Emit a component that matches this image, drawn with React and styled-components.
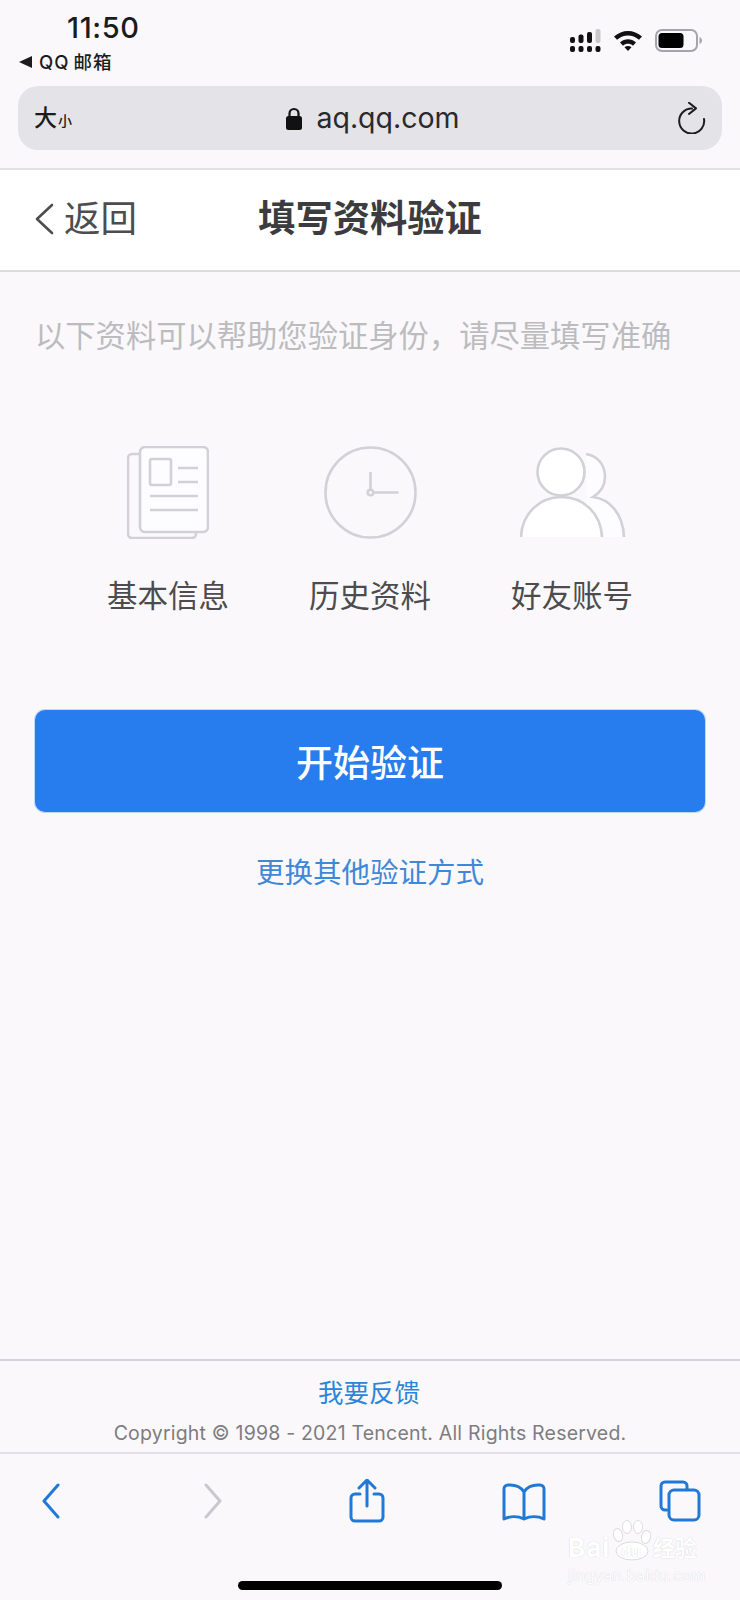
import styled, { createGlobalStyle } from 'styled-components';

const GlobalStyle = createGlobalStyle`
	html, body {
		margin: 0;
		padding: 0;
		background: #faf8fb;
	}
	* {
		box-sizing: border-box;
	}
`;

const FONT = `Inter, "Noto Sans CJK SC", sans-serif`;

const Page = styled.div`
	position: relative;
	width: 740px;
	height: 1600px;
	display: flex;
	flex-direction: column;
	overflow: hidden;
	background: #faf8fb;
	font-family: ${FONT};
`;

const StatusBar = styled.div`
	height: 86px;
	padding: 13px 38px 0 19px;
	display: flex;
	justify-content: space-between;
`;

const StatusLeft = styled.div`
	display: flex;
	flex-direction: column;
`;

const Time = styled.div`
	margin-left: 48px;
	font-size: 29px;
	line-height: 30px;
	font-weight: 500;
	letter-spacing: 0.6px;
	color: #1c1c1e;
`;

const BackApp = styled.div`
	margin-top: 8px;
	display: flex;
	align-items: center;
	gap: 7px;
	font-size: 18.5px;
	line-height: 22px;
	font-weight: 500;
	color: #1c1c1e;
`;

const BackArrow = styled.span`
	width: 0;
	height: 0;
	border-style: solid;
	border-width: 6px 13px 6px 0;
	border-color: transparent #1c1c1e transparent transparent;
`;

const AppName = styled.span`
	display: flex;
	gap: 4px;
	letter-spacing: 1px;
`;

const StatusIcons = styled.div`
	margin-top: 16px;
	display: flex;
	align-items: flex-start;
`;

const UrlBar = styled.div`
	margin: 0 18px;
	height: 64px;
	border-radius: 20px;
	background: #e4e3e7;
	display: grid;
	grid-template-columns: 1fr auto 1fr;
	align-items: center;
	padding: 0 16px;
	color: #1c1c1e;
`;

const TextSize = styled.div`
	display: flex;
	align-items: flex-end;
	font-size: 23px;
	line-height: 26px;
	font-weight: 500;
`;

const SmallChar = styled.span`
	font-size: 14px;
	line-height: 20px;
	margin-left: 1px;
`;

const Domain = styled.div`
	margin-left: 5px;
	display: flex;
	align-items: center;
	gap: 13px;
	font-size: 28.5px;
	line-height: 34px;
	color: #2a2a2c;
`;

const ReloadWrap = styled.div`
	display: flex;
	justify-content: flex-end;
`;

const Header = styled.div`
	margin-top: 18px;
	height: 104px;
	background: #fff;
	border-top: 2px solid #e2e1e5;
	border-bottom: 2px solid #dcdbdf;
	display: grid;
	grid-template-columns: 1fr auto 1fr;
	align-items: center;
	padding: 0 34px 2px;
`;

const BackLink = styled.div`
	display: flex;
	align-items: center;
	gap: 10px;
	font-size: 36.5px;
	line-height: 44px;
	color: #4d4d4f;
`;

const Title = styled.div`
	font-size: 37.3px;
	line-height: 46px;
	font-weight: 700;
	color: #3c3c3e;
`;

const Hint = styled.div`
	margin: 44px 0 0 35px;
	font-size: 30.3px;
	line-height: 40px;
	color: #bcbcbf;
	white-space: nowrap;
`;

const Features = styled.div`
	margin-top: 90px;
	display: grid;
	grid-template-columns: repeat(3, 202px);
	justify-content: center;
`;

const Feature = styled.div`
	display: flex;
	flex-direction: column;
	align-items: center;
`;

const FeatureIcon = styled.svg`
	display: block;
	height: 93px;
	fill: none;
	stroke: #d2d1d5;
	stroke-width: 2.6;
`;

const FeatureLabel = styled.div`
	margin-top: 38px;
	font-size: 30.5px;
	line-height: 38px;
	color: #4c4c4e;
`;

const PrimaryButton = styled.div`
	margin: 95px 35px 0;
	height: 102px;
	border-radius: 10px;
	background: #277ded;
	box-shadow: 0 0 0 1px rgba(130, 185, 250, 0.5);
	color: #fff;
	font-size: 37px;
	font-weight: 500;
	display: flex;
	align-items: center;
	justify-content: center;
`;

const SwitchLink = styled.div`
	margin-top: 43px;
	text-align: center;
	font-size: 28.5px;
	line-height: 36px;
	color: #3f88d8;
`;

const Spacer = styled.div`
	flex: 1;
`;

const Footer = styled.div`
	height: 95px;
	border-top: 2px solid #d4d3d7;
	border-bottom: 2px solid #e2e1e5;
	display: flex;
	flex-direction: column;
	align-items: center;
	padding-top: 16px;
`;

const FeedbackLink = styled.div`
	margin-right: 2px;
	font-size: 25.5px;
	line-height: 32px;
	color: #2b85da;
`;

const Copyright = styled.div`
	margin-top: 12px;
	font-size: 19.5px;
	line-height: 24px;
	letter-spacing: 0.2px;
	color: #7d7d80;
	white-space: nowrap;
`;

const Toolbar = styled.div`
	height: 146px;
	padding-left: 42px;
	display: flex;
	flex-direction: column;
`;

const ToolRow = styled.div`
	margin-top: 25px;
	display: flex;
	align-items: flex-start;
`;

const ToolIcon = styled.svg`
	display: block;
	flex: none;
	margin-left: ${(p) => p.$left || 0}px;
	margin-top: ${(p) => p.$top || 0}px;
	fill: none;
	stroke: ${(p) => (p.$off ? '#c9c8cc' : '#2079d6')};
	stroke-width: 3;
	stroke-linecap: round;
	stroke-linejoin: round;
`;

const HomeBar = styled.div`
	margin: 58px 0 0 196px;
	width: 264px;
	height: 9px;
	border-radius: 5px;
	background: #000;
`;

const Watermark = styled.div`
	position: absolute;
	left: 568px;
	top: 1520px;
	width: 132px;
	display: flex;
	flex-direction: column;
	color: #fff;
	text-shadow: 0 0 1px #c6c6ca;
`;

const WatermarkRow = styled.div`
	display: flex;
	align-items: flex-end;
	height: 41px;
`;

const WatermarkWord = styled.span`
	width: 44px;
	font-size: 26px;
	line-height: 26px;
	font-weight: 700;
	letter-spacing: 1px;
`;

const PawBox = styled.div`
	position: relative;
	width: 41px;
	height: 41px;
	color: #fff;
`;

const PawText = styled.span`
	position: absolute;
	left: 9px;
	bottom: 1px;
	font-size: 16px;
	line-height: 18px;
	font-weight: 700;
`;

const WatermarkCn = styled.span`
	font-size: 22px;
	line-height: 26px;
	font-weight: 700;
`;

const WatermarkSub = styled.div`
	margin-top: 7px;
	font-size: 15.5px;
	line-height: 16px;
	letter-spacing: 0.2px;
	white-space: nowrap;
`;

const App = () => (
	<Page>
		<GlobalStyle />
		<StatusBar>
			<StatusLeft>
				<Time>11:50</Time>
				<BackApp>
					<BackArrow />
					<AppName>
						<span>QQ</span>
						<span>邮箱</span>
					</AppName>
				</BackApp>
			</StatusLeft>
			<StatusIcons>
				<svg width="32" height="23" viewBox="0 0 32 23">
					<g fill="#111">
						<rect x="0" y="8" width="5" height="6" rx="2" />
						<rect x="8.500" y="5.500" width="5" height="8.500" rx="2" />
						<rect x="17" y="3" width="5" height="11" rx="2" />
						<rect x="0" y="17" width="5" height="6" rx="2" />
						<rect x="8.500" y="17" width="5" height="6" rx="2" />
						<rect x="17" y="17" width="5" height="6" rx="2" />
						<rect x="25.500" y="17" width="5" height="6" rx="2" />
					</g>
					<rect x="25.500" y="0" width="5" height="14" rx="2" fill="#c9c8cc" />
				</svg>
				<svg width="30" height="22" viewBox="0 0 30 22" style={{ marginLeft: 11 }}>
					<path d="M1 7.500C9 0 21 0 29 7.500l-3 3.300C19.500 5 10.500 5 4 10.800z" fill="#111" />
					<path d="M7 13.500c4.800-4.300 11.200-4.300 16 0l-3 3.200c-3-2.600-7-2.600-10 0z" fill="#111" />
					<path d="M11.500 18.300c2-1.600 5-1.600 7 0L15 22z" fill="#111" />
				</svg>
				<svg width="47" height="23" viewBox="0 0 47 23" style={{ marginLeft: 12 }}>
					<rect x="1" y="1" width="41" height="21" rx="6" fill="none" stroke="#a5a4a8" strokeWidth="2" />
					<rect x="3.500" y="4" width="25" height="15" rx="3.500" fill="#000" />
					<path d="M44.500 8c1.500.5 2.500 2 2.500 3.500S46 14.500 44.500 15z" fill="#a5a4a8" />
				</svg>
			</StatusIcons>
		</StatusBar>

		<UrlBar>
			<TextSize>
				大<SmallChar>小</SmallChar>
			</TextSize>
			<Domain>
				<svg width="18" height="23" viewBox="0 0 18 23">
					<path d="M4.500 10V6.500a4.500 4.500 0 0 1 9 0V10" fill="none" stroke="#111" strokeWidth="2.200" />
					<rect x="1" y="9" width="16" height="14" rx="2.500" fill="#111" />
				</svg>
				aq.qq.com
			</Domain>
			<ReloadWrap>
				<svg width="28" height="32" viewBox="0 0 28 32" fill="none" stroke="#1c1c1e" strokeWidth="2" strokeLinecap="round" strokeLinejoin="round">
					<path d="M14 6.600A12.500 12.500 0 1 0 26 17" />
					<path d="M11 .8l7 5.600-7 5.600" />
				</svg>
			</ReloadWrap>
		</UrlBar>

		<Header>
			<BackLink>
				<svg width="20" height="32" viewBox="0 0 20 32" fill="none" stroke="#4d4d4f" strokeWidth="2.600" strokeLinecap="round" strokeLinejoin="round">
					<path d="M18 2L3 16l15 14" />
				</svg>
				返回
			</BackLink>
			<Title>填写资料验证</Title>
			<span />
		</Header>

		<Hint>以下资料可以帮助您验证身份，请尽量填写准确</Hint>

		<Features>
			<Feature>
				<FeatureIcon width="82" viewBox="0 0 82 93">
					<path d="M13 8H5a4 4 0 0 0-4 4v76a4 4 0 0 0 4 4h60a4 4 0 0 0 4-4v-3" />
					<rect x="13" y="1" width="68" height="85" rx="5" fill="#fdfcfe" />
					<rect x="23" y="13" width="21" height="26" rx="2" />
					<path d="M51 22h20M51 36h20M23 50h48M23 64h48" />
				</FeatureIcon>
				<FeatureLabel>基本信息</FeatureLabel>
			</Feature>
			<Feature>
				<FeatureIcon width="93" viewBox="0 0 93 93">
					<circle cx="46.500" cy="46.500" r="45" />
					<path d="M46.500 26v18M49.500 46.500h25" />
					<circle cx="46.500" cy="46.500" r="2.800" />
				</FeatureIcon>
				<FeatureLabel>历史资料</FeatureLabel>
			</Feature>
			<Feature>
				<FeatureIcon width="108" viewBox="0 0 108 93">
					<path d="M68 8C80 10 87 19 87 31c0 8-4 15-12 20 17 2 30 17 31 40H70z" fill="#fdfcfe" stroke="none" />
					<path d="M68 8C80 10 87 19 87 31c0 8-4 15-12 20 17 2 30 17 31 40" />
					<path d="M3 91C4 68 21 51 43.500 51S83 68 84 91" fill="#fff" />
					<circle cx="43" cy="26" r="23.500" fill="#fff" />
				</FeatureIcon>
				<FeatureLabel>好友账号</FeatureLabel>
			</Feature>
		</Features>

		<PrimaryButton>开始验证</PrimaryButton>
		<SwitchLink>更换其他验证方式</SwitchLink>
		<Spacer />

		<Footer>
			<FeedbackLink>我要反馈</FeedbackLink>
			<Copyright>Copyright © 1998 - 2021 Tencent. All Rights Reserved.</Copyright>
		</Footer>

		<Toolbar>
			<ToolRow>
				<ToolIcon width="18" height="36" viewBox="0 0 18 36" $top={4}>
					<path d="M16 2L2 18l14 16" />
				</ToolIcon>
				<ToolIcon width="20" height="36" viewBox="0 0 20 36" $off $left={143} $top={4}>
					<path d="M3 2l14 16L3 34" />
				</ToolIcon>
				<ToolIcon width="36" height="44" viewBox="0 0 36 44" $left={126}>
					<path d="M18 2v25M10 9l8-8 8 8" />
					<path d="M11 15H6a4 4 0 0 0-4 4v19a4 4 0 0 0 4 4h24a4 4 0 0 0 4-4V19a4 4 0 0 0-4-4h-5" />
				</ToolIcon>
				<ToolIcon width="44" height="38" viewBox="0 0 44 38" $left={117} $top={4}>
					<path d="M22 9C19 4 14 2 8 2H6a4 4 0 0 0-4 4v30c6-3 14-3 20 0 6-3 14-3 20 0V6a4 4 0 0 0-4-4h-2c-6 0-11 2-14 7zM22 9v27" />
				</ToolIcon>
				<ToolIcon width="42" height="42" viewBox="0 0 42 42" $left={113} $top={1}>
					<path d="M8 30H6a4 4 0 0 1-4-4V6a4 4 0 0 1 4-4h18a4 4 0 0 1 4 4v3" />
					<rect x="10" y="10" width="30" height="30" rx="5" />
				</ToolIcon>
			</ToolRow>
			<HomeBar />
		</Toolbar>

		<Watermark>
			<WatermarkRow>
				<WatermarkWord>Bai</WatermarkWord>
				<PawBox>
					<svg width="41" height="41" viewBox="0 0 41 41" fill="#fff" stroke="#dcdce0" strokeWidth="1">
						<ellipse cx="6" cy="15" rx="4.500" ry="6.500" transform="rotate(-15 6 15)" />
						<ellipse cx="15" cy="7" rx="4.500" ry="6.500" />
						<ellipse cx="26" cy="7" rx="4.500" ry="6.500" />
						<ellipse cx="34" cy="17" rx="4.500" ry="6.500" transform="rotate(15 34 17)" />
						<ellipse cx="20" cy="31" rx="16" ry="9" />
					</svg>
					<PawText>du</PawText>
				</PawBox>
				<WatermarkCn>经验</WatermarkCn>
			</WatermarkRow>
			<WatermarkSub>jingyan.baidu.com</WatermarkSub>
		</Watermark>
	</Page>
);

export default App;
